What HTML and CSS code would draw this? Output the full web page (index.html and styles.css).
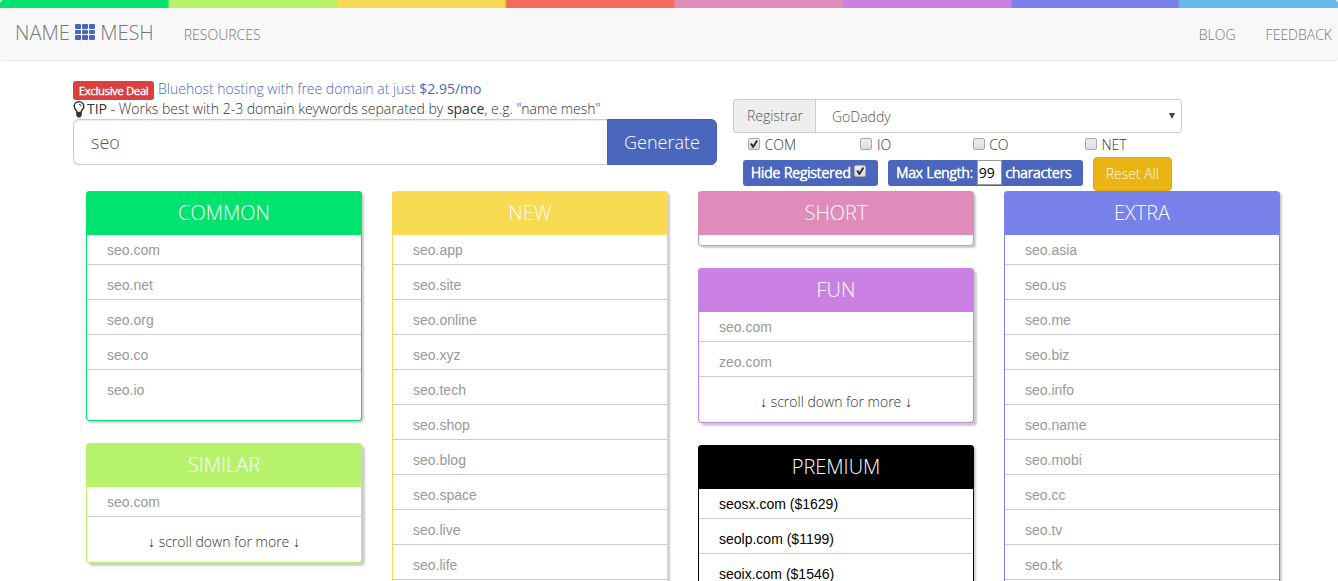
FILE: index.html
```html
<!DOCTYPE html>
<html lang="en">
<head>
<meta charset="utf-8">
<title>Name Mesh</title>
<link rel="stylesheet" href="styles.css">
</head>
<body>
<header class="navbar">
  <nav class="nav">
    <a class="brand" href="#">NAME
      <svg class="brand-icon" viewBox="0 0 20 17" aria-hidden="true"><path d="M1 0h4q1 0 1 1v3q0 1-1 1H1q-1 0-1-1V1q0-1 1-1zM8 0h4q1 0 1 1v3q0 1-1 1H8q-1 0-1-1V1q0-1 1-1zM15 0h4q1 0 1 1v3q0 1-1 1h-4q-1 0-1-1V1q0-1 1-1zM1 6h4q1 0 1 1v2q0 1-1 1H1q-1 0-1-1V7q0-1 1-1zM8 6h4q1 0 1 1v2q0 1-1 1H8q-1 0-1-1V7q0-1 1-1zM15 6h4q1 0 1 1v2q0 1-1 1h-4q-1 0-1-1V7q0-1 1-1zM1 11h4q1 0 1 1v3q0 1-1 1H1q-1 0-1-1v-3q0-1 1-1zM8 11h4q1 0 1 1v3q0 1-1 1H8q-1 0-1-1v-3q0-1 1-1zM15 11h4q1 0 1 1v3q0 1-1 1h-4q-1 0-1-1v-3q0-1 1-1z"/></svg>
      MESH</a>
    <a class="nav-link" href="#">RESOURCES</a>
    <a class="nav-link nav-right" href="#">BLOG</a>
    <a class="nav-link" href="#">FEEDBACK</a>
  </nav>
</header>
<main class="main">
  <form class="search">
    <div class="query">
      <p class="note"><span class="badge">Exclusive Deal</span> <a class="deal" href="#">Bluehost hosting with free domain at just <b>$2.95/mo</b></a></p>
      <p class="note"><svg class="bulb" viewBox="0 0 12 17" aria-hidden="true"><path class="bulb-glass" d="M4 11.500C4 9 1.200 8.300 1.200 5.300a4.800 4.500 0 0 1 9.600 0C10.800 8.300 8 9 8 11.500z"/><path class="bulb-shine" d="M6 3.300q2 0 2.300 2"/><path class="bulb-base" d="M3.300 11.300h5.400v3L7.300 16.500H4.700L3.300 14.300z"/></svg><b>TIP</b> - Works best with 2-3 domain keywords separated by <b>space</b>, e.g. "name mesh"</p>
      <div class="query-bar">
        <input class="query-input" type="text" value="seo" aria-label="Domain keywords">
        <button class="generate" type="button">Generate</button>
      </div>
    </div>
    <div class="filters">
      <div class="registrar">
        <label class="registrar-label" for="registrar">Registrar</label>
        <div class="select-wrap"><select class="registrar-select" id="registrar"><option>GoDaddy</option></select></div>
      </div>
      <div class="tlds">
        <label class="tld"><input class="check" type="checkbox" checked> COM</label>
        <label class="tld"><input class="check" type="checkbox"> IO</label>
        <label class="tld"><input class="check" type="checkbox"> CO</label>
        <label class="tld"><input class="check" type="checkbox"> NET</label>
      </div>
      <div class="options">
        <label class="pill">Hide Registered <input class="check" type="checkbox" checked></label>
        <label class="pill">Max Length: <input class="length" type="text" value="99"> characters</label>
        <button class="reset" type="button">Reset All</button>
      </div>
    </div>
  </form>
  <div class="results">
    <div class="column">
      <section class="card common"><h2 class="card-title">COMMON</h2>
        <ul class="list"><li>seo.com</li><li>seo.net</li><li>seo.org</li><li>seo.co</li><li>seo.io</li></ul></section>
      <section class="card similar scrolls"><h2 class="card-title">SIMILAR</h2>
        <ul class="list"><li>seo.com</li></ul><p class="more">↓ scroll down for more ↓</p></section>
    </div>
    <div class="column">
      <section class="card new"><h2 class="card-title">NEW</h2>
        <ul class="list"><li>seo.app</li><li>seo.site</li><li>seo.online</li><li>seo.xyz</li><li>seo.tech</li><li>seo.shop</li><li>seo.blog</li><li>seo.space</li><li>seo.live</li><li>seo.life</li></ul></section>
    </div>
    <div class="column">
      <section class="card short"><h2 class="card-title">SHORT</h2></section>
      <section class="card fun scrolls"><h2 class="card-title">FUN</h2>
        <ul class="list"><li>seo.com</li><li>zeo.com</li></ul><p class="more">↓ scroll down for more ↓</p></section>
      <section class="card premium"><h2 class="card-title">PREMIUM</h2>
        <ul class="list"><li>seosx.com ($1629)</li><li>seolp.com ($1199)</li><li>seoix.com ($1546)</li></ul></section>
    </div>
    <div class="column">
      <section class="card extra"><h2 class="card-title">EXTRA</h2>
        <ul class="list"><li>seo.asia</li><li>seo.us</li><li>seo.me</li><li>seo.biz</li><li>seo.info</li><li>seo.name</li><li>seo.mobi</li><li>seo.cc</li><li>seo.tv</li><li>seo.tk</li></ul></section>
    </div>
  </div>
</main>
</body>
</html>
```
FILE: styles.css
```css
* { box-sizing: border-box; }
body {
  margin: 0;
  height: 100vh;
  overflow: hidden;
  background: #fff;
  color: #333;
  font: 300 14px/20px "Open Sans", sans-serif;
}
b { font-weight: 400; }
a { color: inherit; text-decoration: none; }
input, select, button { font: inherit; margin: 0; }

.navbar {
  background: #f8f8f8;
  border-bottom: 1px solid #e7e7e7;
  border-radius: 4px;
  overflow: hidden;
}
.navbar::before {
  content: "";
  display: block;
  height: 8px;
  background: linear-gradient(to right,
    #00e36f 12.5%, #b6f36b 12.7%, #b6f36b 25.100%, #f8da53 25.300%,
    #f8da53 37.700%, #f36b5c 37.900%, #f36b5c 50.300%, #df8cba 50.500%,
    #df8cba 62.900%, #cb80e4 63.100%, #cb80e4 75.500%, #7881ea 75.700%,
    #7881ea 88%, #69baea 88.200%);
}
.nav {
  display: flex;
  align-items: center;
  gap: 30px;
  height: 52px;
  padding: 0 6px 0 15px;
  color: #777;
}
.brand { font-size: 20px; padding-bottom: 2px; }
.brand-icon { width: 20px; height: 17px; fill: #4b67bd; vertical-align: -1px; }
.nav-link { padding-top: 2px; }
.nav-right { margin-left: auto; }

.main { margin: 18px 58px 0 73px; }
.search {
  display: grid;
  grid-template-columns: 644fr 449fr 82fr;
  gap: 16px;
}
.note { height: 20px; margin: 0; white-space: nowrap; }
.badge {
  display: inline-block;
  margin-top: 2px;
  padding: 0 6px;
  border-radius: 3px;
  background: #da413e;
  color: #fff;
  font-size: 11px;
  line-height: 19px;
  -webkit-text-stroke: 0.6px #fff;
  vertical-align: top;
}
.deal { color: #4b67bd; }
.bulb { width: 12px; height: 17px; margin-right: 2px; vertical-align: -4px; }
.bulb-glass, .bulb-shine { fill: none; stroke: #333; stroke-width: 1.5; }
.bulb-shine { stroke-width: 1; }
.bulb-base { fill: #333; }
.query-bar { display: flex; height: 46px; }
.query-input {
  flex: 1;
  min-width: 0;
  padding: 0 17px;
  border: 1px solid #ccc;
  border-right: 0;
  border-radius: 6px 0 0 6px;
  box-shadow: inset 0 1px 1px rgba(0, 0, 0, .075);
  color: #555;
  font-size: 18px;
}
.generate {
  width: 110px;
  border: 1px solid #435cab;
  border-radius: 0 6px 6px 0;
  background: #4b67bd;
  color: #fff;
  font-size: 18px;
}

.filters { padding-top: 20px; }
.registrar { display: flex; height: 34px; }
.registrar-label {
  padding: 6px 12px 6px 13px;
  border: 1px solid #ccc;
  border-right: 0;
  border-radius: 4px 0 0 4px;
  background: #eee;
  color: #555;
}
.select-wrap { flex: 1; position: relative; }
.select-wrap::after {
  content: "";
  position: absolute;
  right: 7px;
  top: 14px;
  border: 3px solid transparent;
  border-top: 6px solid #444;
  border-bottom: 0;
}
.registrar-select {
  appearance: none;
  width: 100%;
  height: 100%;
  padding: 2px 16px 0;
  border: 1px solid #ccc;
  border-radius: 0 4px 4px 0;
  background: #fff;
  color: #555;
}
.tlds {
  display: grid;
  grid-template-columns: repeat(4, 1fr);
  height: 24px;
  padding-top: 2px;
}
.tld { padding-left: 15px; }
.check {
  appearance: none;
  position: relative;
  width: 12px;
  height: 12px;
  border: 1px solid #aaa;
  border-radius: 2px;
  background: linear-gradient(#eee, #ddd);
  vertical-align: 0;
}
.tld .check { margin-right: 1px; }
.check:checked::before {
  content: "";
  position: absolute;
  inset: 1px;
  background: #333;
  clip-path: polygon(0 50%, 22% 38%, 40% 62%, 78% 0, 100% 14%, 45% 100%, 32% 100%);
}
.options { display: flex; align-items: center; gap: 10px; padding-left: 10px; white-space: nowrap; }
.pill {
  height: 26px;
  margin-bottom: 2px;
  padding: 0 8px;
  border-radius: 3px;
  background: #4b67bd;
  color: #fff;
  line-height: 26px;
  -webkit-text-stroke: 0.7px #fff;
}
.pill:first-child { padding-right: 12px; }
.pill:nth-child(2) { padding-right: 11px; }
.pill .check { vertical-align: 1px; }
.length {
  width: 25px;
  height: 25px;
  padding: 0 1px;
  border: 1px solid #999;
  background: #fff;
  color: #000;
  font-weight: 400;
  vertical-align: top;
  -webkit-text-stroke: 0;
}
.reset {
  height: 34px;
  padding: 0 12px;
  border: 1px solid #e2a80c;
  border-radius: 4px;
  background: #eab414;
  color: #fff;
}

.results {
  display: grid;
  grid-template-columns: repeat(4, 1fr);
  gap: 30px;
  padding-left: 13px;
}
.column { display: flex; flex-direction: column; gap: 22px; }
.card {
  padding-bottom: 10px;
  border: 1px solid var(--tone);
  border-top: 0;
  border-radius: 4px;
  background: #fff;
  box-shadow: 2px 2px 2px rgba(0, 0, 0, .2);
}
.scrolls { box-shadow: 3px 3px 2px rgba(0, 0, 0, .2); }
.card-title {
  margin: 0 -1px;
  border-radius: 4px 4px 0 0;
  background: var(--tone);
  color: #fff;
  font-size: 20px;
  font-weight: 300;
  line-height: 44px;
  text-align: center;
}
.list {
  margin: 0;
  padding: 0;
  list-style: none;
  color: #999;
  font-family: "Liberation Sans", Arial, sans-serif;
  font-weight: 400;
}
.list li { padding: 10px 20px 4px; border-bottom: 1px solid #ccc; }
.list li:first-child { padding-top: 5px; }
.more { margin: 15px 0 0; text-align: center; }
.common { --tone: #00e36f; padding-bottom: 15px; }
.common li:last-child { border-color: transparent; }
.similar { --tone: #b6f36b; }
.new { --tone: #f8da53; }
.short { --tone: #df8cba; }
.fun { --tone: #cb80e4; }
.premium { --tone: #000; }
.premium .list { color: #000; }
.extra { --tone: #7881ea; }
```
